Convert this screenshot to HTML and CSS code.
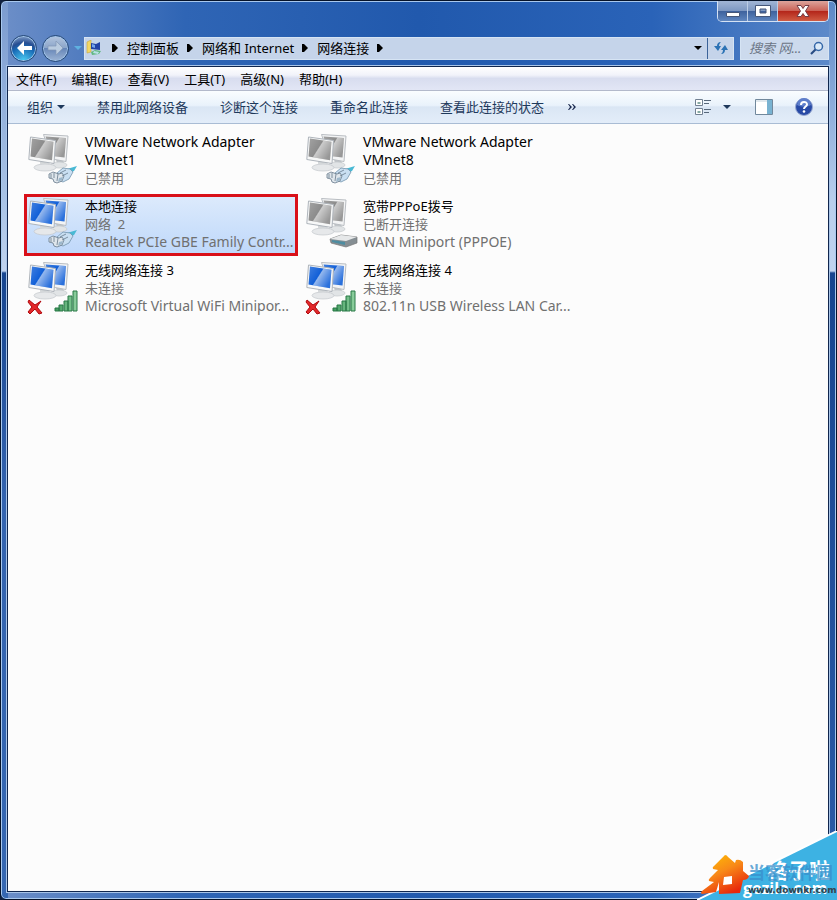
FILE: index.html
```html
<!DOCTYPE html>
<html lang="zh-CN">
<head>
  <meta charset="UTF-8">
  <meta name="viewport" content="width=device-width, initial-scale=1">
  <title>网络连接</title>
  <link rel="stylesheet" href="styles.css">
</head>
<body>
  <!-- 共用图标 -->
  <svg class="defs" aria-hidden="true">
    <defs>
      <linearGradient id="shine" x1="0" y1="0" x2="1" y2=".6">
        <stop offset="0" stop-color="#fff" stop-opacity=".2"/>
        <stop offset=".5" stop-color="#fff" stop-opacity="0"/>
        <stop offset=".54" stop-color="#fff" stop-opacity=".55"/>
        <stop offset="1" stop-color="#fff" stop-opacity=".1"/>
      </linearGradient>
      <linearGradient id="stand" x1="0" y1="0" x2="0" y2="1">
        <stop offset="0" stop-color="#b9bec2"/>
        <stop offset="1" stop-color="#eceeef"/>
      </linearGradient>
      <linearGradient id="bars" x1="0" y1="0" x2="1" y2="0">
        <stop offset="0" stop-color="#3f9a5c"/>
        <stop offset="1" stop-color="#8fd0a0"/>
      </linearGradient>
      <linearGradient id="house" x1="0" y1="0" x2=".6" y2="1">
        <stop offset="0" stop-color="#ffc400"/>
        <stop offset=".5" stop-color="#f88a18"/>
        <stop offset="1" stop-color="#e8280c"/>
      </linearGradient>
      <symbol id="monitors" viewBox="0 0 52 52">
        <path d="M28 26h7l1 5h-7z" fill="#bfc4c8"/>
        <ellipse cx="31" cy="32" rx="8" ry="3" fill="#e1e4e6" stroke="#c6cacd" stroke-width=".7"/>
        <path d="M15.500 1.500 40 3 38 28.500 24 26Z" fill="#f3f4f5" stroke="#b9bdc2"/>
        <path d="M17.500 3.500 38 5 36.500 24.500 24 23Z" fill="currentColor"/>
        <path d="M17.500 3.500 38 5 36.500 24.500 24 23Z" fill="url(#shine)"/>
        <path d="M12 26h9l1 7h-10z" fill="url(#stand)"/>
        <ellipse cx="17" cy="34.500" rx="11" ry="3.500" fill="#e6e8ea" stroke="#c3c7cb" stroke-width=".7"/>
        <path d="M2.500 4 27.500 7.500 26 30.500 .8 26.500Z" fill="#f7f8f8" stroke="#aeb4bb"/>
        <path d="M4 5.500 25.500 8.700 24 27.200 2.500 23.500Z" fill="currentColor"/>
        <path d="M4 5.500 25.500 8.700 24 27.200 2.500 23.500Z" fill="url(#shine)"/>
      </symbol>
      <symbol id="plug" viewBox="0 0 30 20">
        <path d="m19 4 10-3-3 5-6 3z" fill="#49b9d4"/>
        <path d="m9 8 6-5 7 1 3 3-4 7-6 3-5-2z" fill="#c9dff2" stroke="#7293ac" stroke-width=".8"/>
        <path d="m1 9 4-2 6 2 3-1 2 3-2 5-5 2-3-1-1-3-4-1z" fill="#dfe6ec" stroke="#66788a" stroke-width=".8"/>
        <path d="M3 9v4m3-5v5m4-4-1 7m3-8 6-3m-4 6 6-3" fill="none" stroke="#66788a" stroke-width=".8"/>
        <path d="m11 13 4-1-1 3-4 2z" fill="#9db8cc"/>
      </symbol>
      <symbol id="modem" viewBox="0 0 30 16">
        <path d="m1 6 11-4 16 2v6l-11 4L2 10z" fill="#858e93" stroke="#777" stroke-width=".7"/>
        <path d="m1 6 11-4 16 2-11 4z" fill="#e6e8e9"/>
        <path d="m3 7 13 2v3L3 9z" fill="#4d8ca0"/>
      </symbol>
      <symbol id="signal" viewBox="0 0 24 22">
        <path d="M1 18h4v3H1zm4-3h4v6H5zm5-4h4v10h-4zm4-5h4v15h-4zm5-5h4v20h-4z" fill="url(#bars)" stroke="#287946"/>
      </symbol>
      <symbol id="cross" viewBox="0 0 16 16">
        <path d="m2 1 6 5 6-4-4 6 5 6-3 1-4-5-5 5-2-2 4-5-4-5z" fill="#e3282a" stroke="#b0090e"/>
      </symbol>
      <symbol id="chevron" viewBox="0 0 6 8"><path d="M0 0h2l4 4-4 4H0z" fill="currentColor"/></symbol>
      <symbol id="caret" viewBox="0 0 8 4"><path d="M0 0h8L4 4z" fill="currentColor"/></symbol>
    </defs>
  </svg>

  <div class="window">
    <!-- 标题栏 -->
    <header class="titlebar">
      <div class="controls">
        <button type="button" class="control" aria-label="最小化">
          <svg width="16" height="14" viewBox="0 0 16 14"><path d="M1.500 8.500h13v4h-13z" fill="#fff" stroke="#465779"/></svg>
        </button>
        <button type="button" class="control" aria-label="最大化">
          <svg width="16" height="14" viewBox="0 0 16 14"><path d="M.5 1.500h15v11H.5zM5 5v4h6V5z" fill="#fff" fill-rule="evenodd" stroke="#465779"/></svg>
        </button>
        <button type="button" class="control close" aria-label="关闭">
          <svg width="14" height="14" viewBox="0 0 14 14"><path d="M1 1.500h4l2 3 2-3h4L9.500 7l3.500 5.500H9l-2-3-2 3H1L4.500 7z" fill="#fff" stroke="#743c46"/></svg>
        </button>
      </div>
    </header>

    <!-- 地址栏 -->
    <nav class="navbar">
      <div class="history">
        <button type="button" class="round back" aria-label="后退">
          <svg width="18" height="16" viewBox="0 0 18 16"><path d="M9 1 2 8l7 7v-5h8V6H9z" fill="#fff"/></svg>
        </button>
        <button type="button" class="round forward" aria-label="前进">
          <svg width="18" height="16" viewBox="0 0 18 16"><path d="m9 1 7 7-7 7v-5H1V6h8z" fill="#b9cbe0" stroke="#8296b4" stroke-width=".7"/></svg>
        </button>
        <button type="button" class="recent" aria-label="最近页面">
          <svg width="8" height="4"><use href="#caret"/></svg>
        </button>
      </div>
      <div class="address">
        <svg class="place" width="18" height="16" viewBox="0 0 18 16">
          <path d="M1 2 5 0v12l-4 1z" fill="#f2d766" stroke="#c5a440" stroke-width=".6"/>
          <path d="m5 3 5 1 4-2v8l-9-1z" fill="#2342a5"/>
          <path d="m6 4 3 1v3L6 7z" fill="#74a5ed"/>
          <path d="m5 12 4-2 6 1-2 3-7 1z" fill="#63b883"/>
          <path d="m8 11 5 1-1 2-5-1z" fill="#b9e1e8"/>
        </svg>
        <svg class="sep" width="6" height="8"><use href="#chevron"/></svg>
        <a href="#">控制面板</a>
        <svg class="sep" width="6" height="8"><use href="#chevron"/></svg>
        <a href="#">网络和 Internet</a>
        <svg class="sep" width="6" height="8"><use href="#chevron"/></svg>
        <a href="#">网络连接</a>
        <svg class="sep" width="6" height="8"><use href="#chevron"/></svg>
        <button type="button" class="drop" aria-label="展开地址"><svg width="8" height="4"><use href="#caret"/></svg></button>
        <button type="button" class="refresh" aria-label="刷新">
          <svg width="14" height="14" viewBox="0 0 14 14"><path d="M7 1C4 1 3 3 3 5H0l4 5 3-5H5c0-2 1-3 2-4zM7 13c3 0 4-2 4-4h3l-3-5-4 5h2c0 2-1 3-2 4z" fill="#2c73b5"/></svg>
        </button>
      </div>
      <form class="search">
        <input type="text" placeholder="搜索 网..." aria-label="搜索 网络连接">
        <button type="button" aria-label="搜索">
          <svg width="14" height="14" viewBox="0 0 14 14"><circle cx="8.500" cy="5.500" r="4" fill="#dceaf8" stroke="#3567a8" stroke-width="1.500"/><path d="M5.500 8.500 1 13" stroke="#284c83" stroke-width="2.200"/></svg>
        </button>
      </form>
    </nav>

    <div class="client">
      <!-- 菜单 -->
      <div class="menubar">
        <button type="button">文件(F)</button>
        <button type="button">编辑(E)</button>
        <button type="button">查看(V)</button>
        <button type="button">工具(T)</button>
        <button type="button">高级(N)</button>
        <button type="button">帮助(H)</button>
      </div>

      <!-- 命令栏 -->
      <div class="toolbar">
        <div class="commands">
          <button type="button">组织 <svg width="8" height="4"><use href="#caret"/></svg></button>
          <button type="button">禁用此网络设备</button>
          <button type="button">诊断这个连接</button>
          <button type="button">重命名此连接</button>
          <button type="button">查看此连接的状态</button>
          <button type="button" class="more" aria-label="更多命令">
            <svg width="8" height="6" viewBox="0 0 8 6"><path d="m0 0 2 3-2 3h1l3-3-3-3zm4 0 2 3-2 3h1l3-3-3-3z" fill="#18264c"/></svg>
          </button>
        </div>
        <div class="views">
          <button type="button" aria-label="更改视图">
            <svg width="17" height="16" viewBox="0 0 17 16"><path d="M.5.5h7v6h-7zm0 9h7v6h-7z" fill="#fff" stroke="#728192"/><path d="M2.500 3h3v2h-3zm0 9h3v2h-3z" fill="#86a9a3"/><path d="M9 1.500h7M9 4.500h5M9 10.500h7M9 13.500h5" stroke="#58687b"/></svg>
          </button>
          <button type="button" class="view-drop" aria-label="更多选项"><svg width="8" height="4"><use href="#caret"/></svg></button>
          <button type="button" class="preview" aria-label="显示预览窗格">
            <svg width="18" height="16" viewBox="0 0 18 16"><path d="M.5.5h17v15H.5z" fill="#fff" stroke="#71889c"/><path d="M12 1h5v14h-5z" fill="#78b2d1"/><path d="M1 2h11" stroke="#c1d1dc"/></svg>
          </button>
          <button type="button" aria-label="帮助">
            <svg width="18" height="18" viewBox="0 0 18 18"><circle cx="9" cy="9" r="8.500" fill="#284aa5" stroke="#98a9d2"/><path d="M2 7a7 7 0 0 1 14 0c-4 2-10 2-14 0z" fill="#5e7ecb"/><path d="M6 7c0-4 6-4 6-.5 0 2-3 2-3 4.500" fill="none" stroke="#fff" stroke-width="2"/><circle cx="9" cy="13.500" r="1.300" fill="#fff"/></svg>
          </button>
        </div>
      </div>

      <!-- 连接列表 -->
      <main class="connections">
        <article class="item">
          <div class="icon off"><svg class="base"><use href="#monitors"/></svg><svg class="plug"><use href="#plug"/></svg></div>
          <div class="info"><h2 class="latin wrap">VMware Network Adapter VMnet1</h2><p>已禁用</p></div>
        </article>
        <article class="item">
          <div class="icon off"><svg class="base"><use href="#monitors"/></svg><svg class="plug"><use href="#plug"/></svg></div>
          <div class="info"><h2 class="latin wrap">VMware Network Adapter VMnet8</h2><p>已禁用</p></div>
        </article>
        <article class="item selected">
          <div class="icon"><svg class="base"><use href="#monitors"/></svg><svg class="plug"><use href="#plug"/></svg></div>
          <div class="info"><h2>本地连接</h2><p>网络&nbsp; 2</p><p class="latin">Realtek PCIe GBE Family Contr...</p></div>
        </article>
        <article class="item">
          <div class="icon off"><svg class="base"><use href="#monitors"/></svg><svg class="modem"><use href="#modem"/></svg></div>
          <div class="info"><h2>宽带PPPoE拨号</h2><p>已断开连接</p><p class="latin">WAN Miniport (PPPOE)</p></div>
        </article>
        <article class="item">
          <div class="icon"><svg class="base"><use href="#monitors"/></svg><svg class="cross"><use href="#cross"/></svg><svg class="signal"><use href="#signal"/></svg></div>
          <div class="info"><h2>无线网络连接 3</h2><p>未连接</p><p class="latin">Microsoft Virtual WiFi Minipor...</p></div>
        </article>
        <article class="item">
          <div class="icon"><svg class="base"><use href="#monitors"/></svg><svg class="cross"><use href="#cross"/></svg><svg class="signal"><use href="#signal"/></svg></div>
          <div class="info"><h2>无线网络连接 4</h2><p>未连接</p><p class="latin">802.11n USB Wireless LAN Car...</p></div>
        </article>
      </main>
    </div>

    <!-- 站点水印 -->
    <svg class="watermark" width="140" height="69" viewBox="0 0 140 69" role="img" aria-label="格子啦 当客软件园">
      <path d="M0 69 140 0v69z" fill="#3db2e3"/>
      <path d="M0 69 140 0" stroke="#fff" stroke-width="2"/>
      <text class="mark-cn" x="70" y="47">格子啦</text>
      <text class="mark-en" x="46" y="63">gezila.com</text>
      <text class="mark-site" x="51" y="48">当客软件园</text>
      <text class="mark-url" x="51" y="62">www.downkr.com</text>
      <path d="M28 24q2 0 3 2l7 6 1-3q4-1 7 2v9l6 5q-1 4-6 4l-3 13-21 1V51l-3 10-14 2q-2-1 0-3l12-9-5-1q-1-1 1-3l8-8-5-1q-1-2 1-3z" fill="url(#house)"/>
      <path d="m27 46 8-1v8l-9 1z" fill="#fff"/>
    </svg>
  </div>
</body>
</html>
```

FILE: styles.css
```css
* {
  box-sizing: border-box;
}
body {
  margin: 0;
  background: #10203f;
  color: #000;
  font: 13px/18px "Noto Sans", "Noto Sans CJK SC", sans-serif;
}
button {
  padding: 0;
  border: 0;
  background: none;
  color: inherit;
  font: inherit;
  white-space: nowrap;
}
svg {
  display: block;
  flex: none;
}
.defs {
  position: absolute;
  width: 0;
  height: 0;
}

/* 窗口边框 */
.window {
  position: relative;
  display: flex;
  flex-direction: column;
  min-height: 100vh;
  padding: 0 7px 7px 6px;
  border: 1px solid #061329;
  border-radius: 6px;
  background:
    linear-gradient(#7b9bcf, #a9c3e6 200px, #c0d3ef 270px, #17458f 272px, #3464b0 500px, #3567b2) left / 7px 100% no-repeat,
    linear-gradient(#5b87c6, #b8cfec 200px, #c0d3ef 270px, #17458f 272px, #2c5ba7) right / 7px 100% no-repeat,
    linear-gradient(90deg, #6d8fc8, #2f65b5 22%, #2159ad 50%, #2a63b8 78%, #5f8bca);
  box-shadow: inset 0 0 0 1px #a8c8ee;
}

/* 标题栏 */
.titlebar {
  display: flex;
  justify-content: flex-end;
  height: 35px;
}
.controls {
  display: flex;
  height: 21px;
  border: 1px solid #d5e2f4;
  border-top: 0;
  border-radius: 0 0 5px 5px;
  overflow: hidden;
}
.control {
  display: flex;
  align-items: center;
  justify-content: center;
  width: 30px;
  border-right: 1px solid #bccde5;
  background: linear-gradient(#a1b5d5, #7e98c2 48%, #3d619c 50%, #5f86bf);
}
.close {
  width: 50px;
  border-right: 0;
  background: linear-gradient(#dda49c, #cb6358 48%, #b32419 50%, #d05b43);
}

/* 地址栏 */
.navbar {
  display: flex;
  align-items: center;
  height: 24px;
  margin-bottom: 6px;
}
.history {
  display: flex;
  align-items: center;
  gap: 5px;
  width: 77px;
  padding-left: 3px;
}
.round {
  display: flex;
  flex: none;
  align-items: center;
  justify-content: center;
  width: 27px;
  height: 27px;
  border: 1px solid #264978;
  border-radius: 50%;
  box-shadow: inset 0 0 0 1px #9fc2e8;
}
.back {
  background: radial-gradient(circle at 50% 100%, #4ed0f5, #1769b5 50%, #274e92 65%, #a7c0df);
}
.forward {
  background: linear-gradient(#b5c6df, #8aa4c9 48%, #6686b8 50%, #9db5d5);
}
.recent {
  color: #5fb1e0;
}
.address {
  display: flex;
  flex: 1;
  align-items: center;
  min-width: 0;
  height: 23px;
  border: 1px solid #d6e4f4;
  background: #c5d4ea;
}
.address a {
  color: #000;
  text-decoration: none;
  white-space: nowrap;
}
.place {
  margin-left: 1px;
}
.sep {
  margin: 0 9px 0 8px;
}
.drop,
.refresh {
  display: flex;
  align-items: center;
  justify-content: center;
  width: 18px;
  height: 100%;
}
.drop {
  margin-left: auto;
}
.refresh {
  width: 26px;
  border-left: 1px solid #3b6399;
}
.search {
  display: flex;
  align-items: center;
  width: 89px;
  height: 23px;
  margin-left: 6px;
  padding: 0 4px 0 8px;
  border: 1px solid #d6e4f4;
  background: #ccdaed;
}
.search input {
  flex: 1;
  min-width: 0;
  padding: 0;
  border: 0;
  background: none;
  font: inherit;
  font-style: italic;
}
.search input::placeholder {
  color: #6b7585;
}

/* 客户区 */
.client {
  display: flex;
  flex: 1;
  flex-direction: column;
  border: 1px solid #10264e;
  outline: 1px solid #a8c4e8;
  background: #fcfcfc;
}
.menubar {
  display: flex;
  align-items: center;
  gap: 15px;
  height: 24px;
  padding: 0 8px;
  border-bottom: 1px solid #b3b9cb;
  background: linear-gradient(#fff, #f1f3fa 35%, #d8ddef 50%, #e2e6f5);
}
.toolbar {
  display: flex;
  align-items: center;
  justify-content: space-between;
  height: 33px;
  padding: 0 15px 0 19px;
  border-bottom: 1px solid #a9bcd4;
  background: linear-gradient(#fafdff, #e9f2fb 45%, #dae6f4 50%, #e3edf9);
  color: #1e395b;
}
.commands,
.views {
  display: flex;
  align-items: center;
}
.commands {
  gap: 32px;
}
.commands button {
  display: flex;
  align-items: center;
  gap: 4px;
}
.commands .more {
  margin-left: -8px;
}
.view-drop {
  margin: 0 24px 0 11px;
}
.preview {
  margin-right: 22px;
}

/* 连接列表 */
.connections {
  display: grid;
  grid-template-columns: repeat(auto-fill, 274px);
  gap: 2px 4px;
  padding: 6px 16px;
}
.item {
  display: flex;
  height: 62px;
  padding: 3px;
}
.selected {
  padding: 0;
  border: 3px solid #d91019;
  background: linear-gradient(#dceafc, #bfd8fa);
}
.icon {
  position: relative;
  flex: none;
  width: 58px;
  color: #1260d8;
}
.off {
  color: #8c8c8c;
}
.base {
  width: 52px;
  height: 52px;
  margin-left: 1px;
}
.plug,
.modem,
.signal,
.cross {
  position: absolute;
}
.plug {
  right: 7px;
  bottom: 4px;
  width: 30px;
  height: 20px;
}
.modem {
  right: 4px;
  bottom: 4px;
  width: 30px;
  height: 16px;
}
.signal {
  right: 7px;
  bottom: 5px;
  width: 24px;
  height: 22px;
}
.cross {
  left: 0;
  bottom: 2px;
  width: 16px;
  height: 16px;
}
.info {
  min-width: 0;
}
.info h2,
.info p {
  margin: 0;
  font-size: 13px;
  font-weight: 400;
  white-space: nowrap;
}
.info .latin {
  font-size: 14px;
}
.info .wrap {
  padding-right: 16px;
  white-space: normal;
}
.info p {
  color: #707070;
}

/* 水印 */
.watermark {
  position: absolute;
  right: -1px;
  bottom: -1px;
}
.mark-cn {
  fill: #fff;
  font: 700 21px "Noto Sans CJK SC", sans-serif;
}
.mark-en {
  fill: #fff;
  font: 700 16px "Open Sans", sans-serif;
}
.mark-site {
  fill: #398fcb;
  fill-opacity: 0.75;
  font: 700 17px "Noto Sans CJK SC", sans-serif;
}
.mark-url {
  fill: #34434d;
  font: 700 9px "DejaVu Sans", sans-serif;
}
```
